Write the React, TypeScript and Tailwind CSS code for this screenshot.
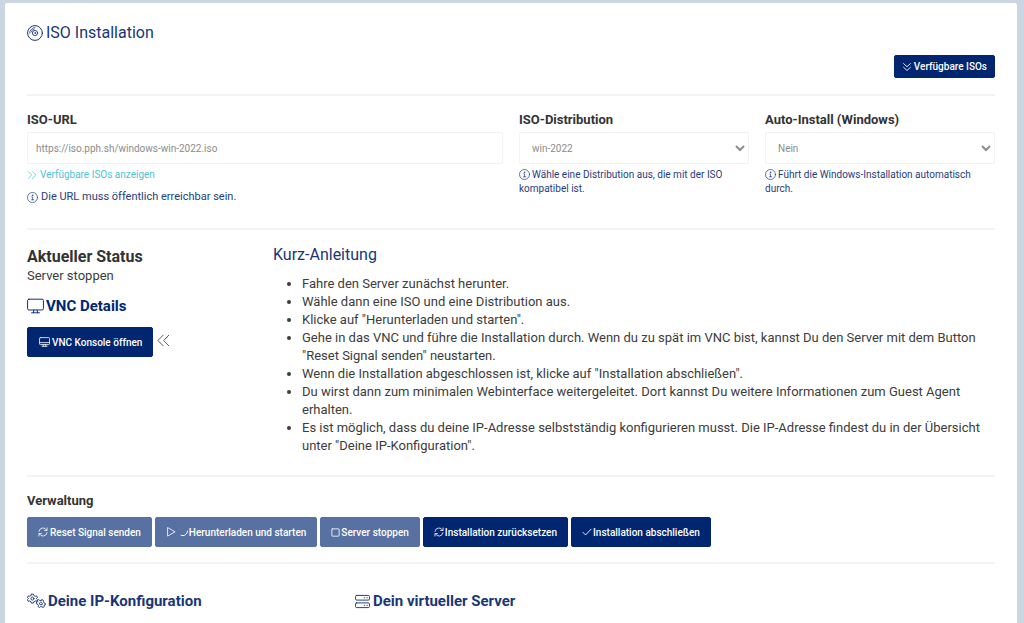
import React from 'react';

interface IconProps {
  className?: string;
}

interface SvgProps extends IconProps {
  viewBox?: string;
  children: React.ReactNode;
}

interface ActionButtonProps {
  icon: React.ReactNode;
  label: string;
  disabled?: boolean;
  small?: boolean;
}

interface SelectFieldProps {
  id: string;
  label: string;
  options: string[];
  hint: string;
}

const Svg: React.FC<SvgProps> = ({ className = '', viewBox = '0 0 16 16', children }) => (
  <svg
    viewBox={viewBox}
    className={`inline-block shrink-0 ${className}`}
    fill="none"
    stroke="currentColor"
    strokeWidth="1"
    strokeLinecap="round"
    strokeLinejoin="round"
    aria-hidden="true"
  >
    {children}
  </svg>
);

const DiscIcon = ({ className }: IconProps) => (
  <Svg className={className}>
    <circle cx="8" cy="8" r="7.4" />
    <circle cx="8" cy="8" r="2.6" strokeWidth="0.9" />
    <circle cx="8" cy="8" r="0.4" strokeWidth="0.8" />
    <path d="M2.6 8A5.4 5.4 0 0 1 8 2.6M4 7.2A4.200 4.200 0 0 1 7.4 3.9" strokeWidth="0.7" />
  </Svg>
);

const InfoIcon = ({ className }: IconProps) => (
  <Svg className={className}>
    <circle cx="8" cy="8" r="7.3" />
    <path d="M6.8 7.2H8.2V11.3M6.5 11.3H9.8" />
    <circle cx="8" cy="4.7" r="0.5" fill="currentColor" />
  </Svg>
);

const ChevronsDownIcon = ({ className }: IconProps) => (
  <Svg className={className}>
    <path d="M2.5 2.5 8 7.5l5.5-5M2.5 8.5 8 13.5l5.5-5" strokeWidth="1.4" />
  </Svg>
);

const ChevronsRightIcon = ({ className }: IconProps) => (
  <Svg className={className}>
    <path d="M2 2.5 7.5 8 2 13.5M8.5 2.5 14 8l-5.5 5.5" strokeWidth="1.2" />
  </Svg>
);

const ChevronsLeftIcon = ({ className }: IconProps) => (
  <Svg className={className}>
    <path d="M7.5 1.5 1.2 8l6.3 6.5M14.5 1.5 8.2 8l6.3 6.5" strokeWidth="1.2" />
  </Svg>
);

const DesktopIcon = ({ className }: IconProps) => (
  <Svg className={className} viewBox="0 0 18 16">
    <rect x="0.6" y="0.8" width="16.8" height="11.4" rx="1.4" />
    <path d="M7.3 12.4 6.8 15M10.7 12.4l0.5 2.6M4.8 15.2h8.4" />
  </Svg>
);

const DesktopAltIcon = ({ className }: IconProps) => (
  <Svg className={className} viewBox="0 0 18 16">
    <rect x="0.8" y="0.8" width="16.4" height="11.4" rx="1.4" strokeWidth="1.3" />
    <path d="M1 9h16M7.3 12.4 6.8 15M10.7 12.4l0.5 2.6M4.8 15h8.4" strokeWidth="1.3" />
  </Svg>
);

const SyncIcon = ({ className }: IconProps) => (
  <Svg className={className}>
    <path
      d="M1.5 7A6.6 6.6 0 0 1 13.8 5M14.5 1.5v4h-4M14.5 9A6.6 6.6 0 0 1 2.2 11M1.5 14.5v-4h4"
      strokeWidth="1.3"
    />
  </Svg>
);

const PlayIcon = ({ className }: IconProps) => (
  <Svg className={className}>
    <path d="M2.5 1.5v13L14 8z" strokeWidth="1.3" />
  </Svg>
);

const SpinnerIcon = ({ className }: IconProps) => (
  <Svg className={className}>
    <path d="M15 6A9 9 0 0 1 2 14.5" strokeWidth="2" />
  </Svg>
);

const StopIcon = ({ className }: IconProps) => (
  <Svg className={className}>
    <rect x="1.5" y="1.5" width="13" height="13" rx="1.2" strokeWidth="1.5" />
  </Svg>
);

const CheckIcon = ({ className }: IconProps) => (
  <Svg className={className}>
    <path d="M1.5 8.5 5.7 12.8 14.5 3.5" strokeWidth="1.4" />
  </Svg>
);

const GEAR = 'M-1-4.7H1L1.5-3.3 3-2.5 4.5-2.8 5.2-1 4.2 0 5.2 1 4.5 2.8 3 2.5 1.5 3.3 1 4.7H-1L-1.5 3.3-3 2.5-4.5 2.8-5.2 1-4.2 0-5.2-1-4.5-2.8-3-2.5-1.5-3.3z';

const CogsIcon = ({ className }: IconProps) => (
  <Svg className={className} viewBox="0 0 20 16">
    <g transform="translate(5.7 5.5)">
      <path d={GEAR} />
      <circle r="1.6" />
    </g>
    <g transform="translate(14.6 10.7) rotate(30) scale(0.9)">
      <path d={GEAR} />
      <circle r="1.6" />
    </g>
  </Svg>
);

const ServerIcon = ({ className }: IconProps) => (
  <Svg className={className}>
    <rect x="0.6" y="1.5" width="14.8" height="5" rx="1.2" />
    <rect x="0.6" y="9.5" width="14.8" height="5" rx="1.2" />
    <path d="M10 4h0.2M12.8 4h0.2M10 12h0.2M12.8 12h0.2" strokeWidth="1.3" />
  </Svg>
);

const ActionButton: React.FC<ActionButtonProps> = ({ icon, label, disabled, small }) => (
  <button
    type="button"
    disabled={disabled}
    className={`inline-flex items-center rounded-xs border border-[#002672] bg-[#002672] text-[10px] font-medium text-white disabled:opacity-65 ${small ? 'h-[23px] gap-[2px] px-[7px]' : 'h-[30px] gap-px px-[10px]'}`}
  >
    {icon}
    <span className="whitespace-nowrap">{label}</span>
  </button>
);

const SelectField: React.FC<SelectFieldProps> = ({ id, label, options, hint }) => (
  <div>
    <label htmlFor={id} className="block text-[13px] leading-5 font-bold">{label}</label>
    <select
      id={id}
      disabled
      className="mt-[2px] h-8 w-full rounded-xs border border-[#f3f3f3] bg-white px-2 text-[10px] text-[#8c8c8c]"
    >
      {options.map(option => <option key={option}>{option}</option>)}
    </select>
    <p className="mt-1 text-[10px] leading-[14px] text-[#1f3c80]">
      <InfoIcon className="mr-[2px] size-[11px] align-[-2px]" />
      {hint}
    </p>
  </div>
);

const STEPS = [
  'Fahre den Server zunächst herunter.',
  'Wähle dann eine ISO und eine Distribution aus.',
  'Klicke auf "Herunterladen und starten".',
  'Gehe in das VNC und führe die Installation durch. Wenn du zu spät im VNC bist, kannst Du den Server mit dem Button "Reset Signal senden" neustarten.',
  'Wenn die Installation abgeschlossen ist, klicke auf "Installation abschließen".',
  'Du wirst dann zum minimalen Webinterface weitergeleitet. Dort kannst Du weitere Informationen zum Guest Agent erhalten.',
  'Es ist möglich, dass du deine IP-Adresse selbstständig konfigurieren musst. Die IP-Adresse findest du in der Übersicht unter "Deine IP-Konfiguration".'
];

const Divider = ({ className = '' }: IconProps) => <hr className={`border-0 border-t-2 border-[#f3f3f3] ${className}`} />;

export default function App() {
  return (
    <div className="min-h-screen overflow-hidden bg-[#ccd6e3] pt-[3px] pr-[7px] pl-[5px] font-['Roboto','Liberation_Sans',sans-serif] text-[13px] text-[#333]">
      <main className="min-h-screen rounded-t-xs bg-white px-[22px] pt-5">
        <h1 className="flex items-center gap-[3px] text-base leading-5 text-[#1a3676]">
          <DiscIcon className="size-4" />
          ISO Installation
        </h1>
        <div className="mt-3 flex justify-end">
          <ActionButton small icon={<ChevronsDownIcon className="size-[10px]" />} label="Verfügbare ISOs" />
        </div>

        <Divider className="mt-4" />

        <section className="mt-[14px] grid grid-cols-4 gap-4">
          <div className="col-span-2">
            <label htmlFor="iso-url" className="block text-[13px] leading-5 font-bold">ISO-URL</label>
            <input
              id="iso-url"
              type="text"
              disabled
              defaultValue="https://iso.pph.sh/windows-win-2022.iso"
              className="mt-[2px] h-8 w-full rounded-xs border border-[#f3f3f3] bg-white px-2 text-[10px] text-[#8c8c8c]"
            />
            <a href="#isos" className="mt-1 flex items-center gap-[3px] text-[10px] leading-[14px] text-[#4cc3d4]">
              <ChevronsRightIcon className="size-[10px]" />
              Verfügbare ISOs anzeigen
            </a>
            <p className="mt-2 flex items-center gap-[3px] text-[11px] leading-[14px] text-[#1f3c80]">
              <InfoIcon className="size-[11px]" />
              Die URL muss öffentlich erreichbar sein.
            </p>
          </div>
          <SelectField
            id="iso-distribution"
            label="ISO-Distribution"
            options={['win-2022']}
            hint="Wähle eine Distribution aus, die mit der ISO kompatibel ist."
          />
          <SelectField
            id="auto-install"
            label="Auto-Install (Windows)"
            options={['Nein', 'Ja']}
            hint="Führt die Windows-Installation automatisch durch."
          />
        </section>

        <Divider className="mt-6" />

        <section className="mt-[17px] grid grid-cols-4 gap-4">
          <div>
            <h2 className="text-base leading-5 font-bold">Aktueller Status</h2>
            <p className="leading-[18px] text-[#3c3c3c]">Server stoppen</p>
            <h3 className="mt-[11px] flex items-center gap-[2px] text-[15px] leading-5 font-bold text-[#002672]">
              <DesktopIcon className="h-4 w-[17px]" />
              VNC Details
            </h3>
            <div className="mt-[11px] flex items-center gap-1">
              <ActionButton icon={<DesktopAltIcon className="mx-px h-[10px] w-[11px]" />} label="VNC Konsole öffnen" />
              <button type="button" aria-label="Einklappen" className="mb-1 flex text-[#555]">
                <ChevronsLeftIcon className="size-[13px]" />
              </button>
            </div>
          </div>
          <div className="col-span-3">
            <h2 className="text-base leading-4 text-[#1a3676]">Kurz-Anleitung</h2>
            <ul className="mt-3 list-disc pl-[29px] leading-[18px] text-[#3c3c3c]">
              {STEPS.map(step => <li key={step}>{step}</li>)}
            </ul>
          </div>
        </section>

        <Divider className="mt-5" />

        <section className="mt-[14px]">
          <h2 className="text-[13px] leading-5 font-bold">Verwaltung</h2>
          <div className="mt-[6px] flex flex-wrap gap-[3px]">
            <ActionButton disabled icon={<SyncIcon className="mr-px size-[10px]" />} label="Reset Signal senden" />
            <ActionButton
              disabled
              icon={
                <>
                  <PlayIcon className="mr-[3px] size-[10px]" />
                  <SpinnerIcon className="size-2" />
                </>
              }
              label="Herunterladen und starten"
            />
            <ActionButton disabled icon={<StopIcon className="size-[9px]" />} label="Server stoppen" />
            <ActionButton icon={<SyncIcon className="size-[10px]" />} label="Installation zurücksetzen" />
            <ActionButton icon={<CheckIcon className="size-[10px]" />} label="Installation abschließen" />
          </div>
        </section>

        <Divider className="mt-[15px]" />

        <section className="mt-[27px] grid grid-cols-3 gap-4">
          <h2 className="flex items-center gap-[2px] text-[15px] leading-5 font-bold text-[#1a3676]">
            <CogsIcon className="h-4 w-[19px]" />
            Deine IP-Konfiguration
          </h2>
          <h2 className="flex items-center gap-[3px] text-[15px] leading-5 font-bold text-[#1a3676]">
            <ServerIcon className="size-[15px]" />
            Dein virtueller Server
          </h2>
        </section>
      </main>
    </div>
  );
}
